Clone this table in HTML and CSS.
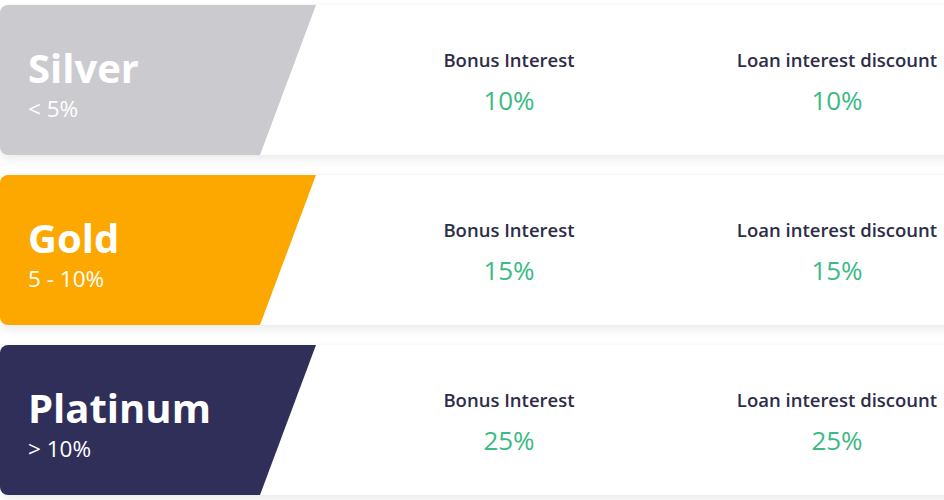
FILE: index.html
```html
<!DOCTYPE html>
<html>
<head>
<meta charset="utf-8">
<link rel="stylesheet" href="styles.css">
</head>
<body>
<div class="list">
  <div class="card">
    <div class="tier silver">
      <div class="tier-name">Silver</div>
      <div class="tier-range">&lt; 5%</div>
    </div>
    <div class="stats">
      <div class="stat"><div class="label">Bonus Interest</div><div class="value">10%</div></div>
      <div class="stat"><div class="label">Loan interest discount</div><div class="value">10%</div></div>
    </div>
  </div>
  <div class="card">
    <div class="tier gold">
      <div class="tier-name">Gold</div>
      <div class="tier-range">5 - 10%</div>
    </div>
    <div class="stats">
      <div class="stat"><div class="label">Bonus Interest</div><div class="value">15%</div></div>
      <div class="stat"><div class="label">Loan interest discount</div><div class="value">15%</div></div>
    </div>
  </div>
  <div class="card">
    <div class="tier platinum">
      <div class="tier-name">Platinum</div>
      <div class="tier-range">&gt; 10%</div>
    </div>
    <div class="stats">
      <div class="stat"><div class="label">Bonus Interest</div><div class="value">25%</div></div>
      <div class="stat"><div class="label">Loan interest discount</div><div class="value">25%</div></div>
    </div>
  </div>
</div>
</body>
</html>
```
FILE: styles.css
```css
html, body {
  margin: 0;
  padding: 0;
  background: #ffffff;
  overflow: hidden;
}
body {
  font-family: "Open Sans", "Noto Sans", sans-serif;
  width: 944px;
  height: 500px;
}
.list {
  display: flex;
  flex-direction: column;
  gap: 20px;
  padding-top: 5px;
  width: 1010px;
}
.card {
  display: flex;
  height: 150px;
  background: #ffffff;
  border-radius: 8px;
  overflow: hidden;
  box-shadow: 0 5px 10px rgba(0, 0, 0, 0.07), 0 -1px 4px rgba(0, 0, 0, 0.03);
}
.tier {
  width: 316px;
  flex: none;
  clip-path: polygon(0 0, 316px 0, 260px 100%, 0 100%);
  color: #ffffff;
  padding: 39px 0 0 28px;
  box-sizing: border-box;
}
.silver { background: #cbcbcf; }
.gold { background: #fca800; }
.platinum { background: #2f2f5a; }
.tier-name {
  font-size: 40px;
  font-weight: 700;
  line-height: 48px;
}
.tier-range {
  font-size: 22.5px;
  line-height: 28px;
  margin-top: 3px;
}
.stats {
  display: flex;
  padding-left: 29px;
}
.stat {
  width: 328px;
  text-align: center;
  padding-top: 43px;
}
.label {
  font-size: 18.5px;
  font-weight: 600;
  color: #2d2d48;
  line-height: 24px;
}
.value {
  font-size: 26px;
  color: #3cba84;
  line-height: 34px;
  margin-top: 11px;
}
```
